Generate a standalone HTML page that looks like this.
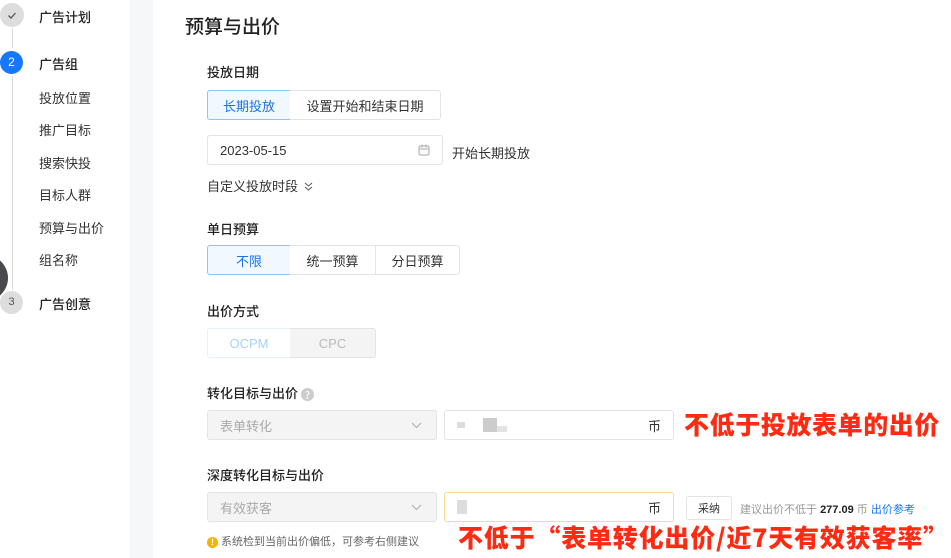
<!DOCTYPE html>
<html><head><meta charset="utf-8"><style>
*{margin:0;padding:0;box-sizing:border-box}
body{width:951px;height:558px;overflow:hidden;background:#fff;font-family:"Liberation Sans","Noto Sans CJK SC",sans-serif;color:#333;position:relative}
.a{position:absolute;white-space:nowrap}
.s{font-size:13px;color:#333}
.b{font-weight:500;color:#222;font-family:"Noto Sans CJK SC",sans-serif}
.btn{position:absolute;height:30px;border:1px solid #e3e3e3;font-size:13px;display:flex;align-items:center;justify-content:center;color:#333;background:#fff}
.sel{border-color:#8fc1fb;background:#f2f8ff;color:#1a73e8}
.inp{position:absolute;height:30px;border:1px solid #e3e3e3;border-radius:3px;font-size:13px;display:flex;align-items:center;padding-left:12px}
.red{color:#ff2a12;font-weight:900;font-size:25px;font-family:"Noto Sans CJK SC",sans-serif;line-height:28px}
</style></head><body>
<div class="a" style="left:130px;top:0;width:23px;height:558px;background:#f6f7f9"></div>
<div class="a" style="left:12px;top:28px;width:1px;height:20px;background:#ddd"></div>
<div class="a" style="left:12px;top:76px;width:1px;height:214px;background:#ddd"></div>
<div class="a" style="left:0;top:3px;width:24px;height:24px;border-radius:50%;background:#ddd"><svg width="24" height="24"><path d="M8.5 12.5l2.5 2.5 4.5-5" stroke="#555" stroke-width="1.3" fill="none"/></svg></div>
<div class="a b" style="left:39px;top:7px;font-size:13px">广告计划</div>
<div class="a" style="left:0;top:51px;width:23px;height:23px;border-radius:50%;background:#1677ff;font-size:12px;text-align:center;line-height:23px;color:#fff">2</div>
<div class="a b" style="left:39px;top:54px;font-size:13px">广告组</div>
<div class="a s" style="left:39px;top:88px">投放位置</div>
<div class="a s" style="left:39px;top:120px">推广目标</div>
<div class="a s" style="left:39px;top:153px">搜索快投</div>
<div class="a s" style="left:39px;top:185px">目标人群</div>
<div class="a s" style="left:39px;top:218px">预算与出价</div>
<div class="a s" style="left:39px;top:250px">组名称</div>
<div class="a" style="left:-38px;top:255px;width:46px;height:46px;border-radius:50%;background:#4a4a4e"></div>
<div class="a" style="left:0;top:291px;width:23px;height:23px;border-radius:50%;background:#ddd;font-size:11px;text-align:center;line-height:23px;color:#555">3</div>
<div class="a b" style="left:39px;top:294px;font-size:13px">广告创意</div>

<div class="a b" style="left:185px;top:12px;font-size:19px">预算与出价</div>
<div class="a b" style="left:207px;top:62px;font-size:13px">投放日期</div>
<div class="btn sel" style="left:207px;top:90px;width:84px;border-radius:3px 0 0 3px">长期投放</div>
<div class="btn" style="left:290px;top:90px;width:151px;border-radius:0 3px 3px 0;border-left:none">设置开始和结束日期</div>
<div class="inp" style="left:207px;top:135px;width:236px;color:#333">2023-05-15<svg style="position:absolute;right:12px;top:8px" width="12" height="12"><rect x="1" y="2" width="10" height="9" rx="1.5" stroke="#aaa" fill="none"/><path d="M1 5h10M4 0.5v3M8 0.5v3" stroke="#aaa"/></svg></div>
<div class="a s" style="left:452px;top:143px">开始长期投放</div>
<div class="a s" style="left:207px;top:176px">自定义投放时段 <svg width="9" height="9" style="margin-left:2px"><path d="M1 1l3.5 3 3.5-3M1 5l3.5 3 3.5-3" stroke="#555" fill="none"/></svg></div>
<div class="a b" style="left:207px;top:219px;font-size:13px">单日预算</div>
<div class="btn sel" style="left:207px;top:245px;width:84px;border-radius:3px 0 0 3px">不限</div>
<div class="btn" style="left:290px;top:245px;width:86px;border-left:none">统一预算</div>
<div class="btn" style="left:375px;top:245px;width:85px;border-radius:0 3px 3px 0">分日预算</div>
<div class="a b" style="left:207px;top:301px;font-size:13px">出价方式</div>
<div class="btn" style="left:207px;top:328px;width:84px;border-radius:3px 0 0 3px;color:#a8d2fb;border-color:#e8f0f8">OCPM</div>
<div class="btn" style="left:290px;top:328px;width:86px;border-radius:0 3px 3px 0;background:#f4f4f4;color:#bbb;border-left:none">CPC</div>

<div class="a b" style="left:207px;top:383px;font-size:13px">转化目标与出价 <span style="display:inline-block;width:13px;height:13px;border-radius:50%;background:#ccc;color:#fff;font-size:10px;text-align:center;line-height:13px;vertical-align:-1px">?</span></div>
<div class="inp" style="left:207px;top:410px;width:230px;background:#f4f4f4;color:#aaa">表单转化<svg style="position:absolute;right:14px;top:11px" width="11" height="7"><path d="M1 1l4.5 4.5L10 1" stroke="#aaa" fill="none"/></svg></div>
<div class="inp" style="left:444px;top:410px;width:230px">
<span style="display:inline-block;width:8px;height:6px;background:#ddd;margin-right:18px"></span><span style="display:inline-block;width:14px;height:14px;background:#ccc"></span><span style="display:inline-block;width:10px;height:6px;background:#e3e3e3;margin-top:8px"></span>
<span style="position:absolute;right:12px;color:#333">币</span></div>
<div class="a red" style="left:684px;top:410px;letter-spacing:0.6px">不低于投放表单的出价</div>

<div class="a b" style="left:207px;top:465px;font-size:13px">深度转化目标与出价</div>
<div class="inp" style="left:207px;top:492px;width:230px;background:#f4f4f4;color:#aaa">有效获客<svg style="position:absolute;right:14px;top:11px" width="11" height="7"><path d="M1 1l4.5 4.5L10 1" stroke="#aaa" fill="none"/></svg></div>
<div class="inp" style="left:444px;top:492px;width:230px;border-color:#fbd998">
<span style="display:inline-block;width:10px;height:14px;background:#ddd"></span>
<span style="position:absolute;right:12px;color:#333">币</span></div>
<div class="btn" style="left:686px;top:496px;width:46px;height:24px;border-radius:3px;font-size:11px">采纳</div>
<div class="a" style="left:740px;top:501px;font-size:11px;color:#999">建议出价不低于 <b style="color:#222">277.09</b> 币 <span style="color:#1677ff">出价参考</span></div>
<div class="a" style="left:207px;top:533px;font-size:11px;color:#666"><span style="display:inline-block;width:11px;height:11px;border-radius:50%;background:#f5b400;color:#fff;font-size:9px;text-align:center;line-height:11px;font-weight:bold">!</span> 系统检到当前出价偏低，可参考右侧建议</div>
<div class="a red" style="left:458px;top:523px;letter-spacing:0.8px">不低于“表单转化出价/近7天有效获客率”</div>
</body></html>
